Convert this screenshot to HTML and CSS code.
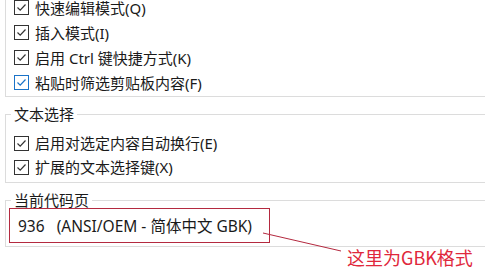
FILE: index.html
```html
<!DOCTYPE html>
<html lang="zh-CN">
<head>
<meta charset="utf-8">
<link rel="stylesheet" href="styles.css">
</head>
<body>
<div class="page">
  <fieldset class="group group-first">
    <div class="row"><span class="cb"><svg viewBox="0 0 13 13"><path d="M2.5 6.5 L5.2 9.2 L10.5 3.5"/></svg></span><span>快速编辑模式(Q)</span></div>
    <div class="row"><span class="cb"><svg viewBox="0 0 13 13"><path d="M2.5 6.5 L5.2 9.2 L10.5 3.5"/></svg></span><span>插入模式(I)</span></div>
    <div class="row"><span class="cb"><svg viewBox="0 0 13 13"><path d="M2.5 6.5 L5.2 9.2 L10.5 3.5"/></svg></span><span>启用 Ctrl 键快捷方式(K)</span></div>
    <div class="row"><span class="cb cb-focus"><svg viewBox="0 0 13 13"><path d="M2.5 6.5 L5.2 9.2 L10.5 3.5"/></svg></span><span>粘贴时筛选剪贴板内容(F)</span></div>
  </fieldset>
  <fieldset class="group group-sel">
    <legend>文本选择</legend>
    <div class="row row-sm"><span class="cb"><svg viewBox="0 0 13 13"><path d="M2.5 6.5 L5.2 9.2 L10.5 3.5"/></svg></span><span>启用对选定内容自动换行(E)</span></div>
    <div class="row row-sm"><span class="cb"><svg viewBox="0 0 13 13"><path d="M2.5 6.5 L5.2 9.2 L10.5 3.5"/></svg></span><span>扩展的文本选择键(X)</span></div>
  </fieldset>
  <fieldset class="group group-code">
    <legend>当前代码页</legend>
    <div class="codebox">936&nbsp;&nbsp;&nbsp;(ANSI/OEM - 简体中文 GBK)</div>
  </fieldset>
</div>
<svg class="arrow" width="485" height="272" viewBox="0 0 485 272"><line x1="263" y1="233" x2="341" y2="251"/></svg>
<div class="note">这里为GBK格式</div>
</body>
</html>
```
FILE: styles.css
```css
html, body {
  margin: 0;
  padding: 0;
  background: #ffffff;
  width: 485px;
  height: 272px;
  overflow: hidden;
}
body {
  position: relative;
  font-family: "Noto Sans", "Noto Sans CJK SC", sans-serif;
  font-size: 15px;
  color: #1a1a1a;
}
.page {
  padding-left: 5px;
  margin-right: -20px;
}
.group {
  border: 1px solid #dcdcdc;
  margin: 0;
  padding: 0 5px 2px 5px;
  min-width: 0;
}
.group legend {
  padding: 0 3px;
  line-height: 20px;
  height: 20px;
  font-size: 15px;
}
.group-first {
  border-top: none;
  margin-top: -5px;
  padding-bottom: 1px;
}
.group-sel {
  margin-top: 7px;
  padding-top: 7px;
  padding-bottom: 3px;
}
.group-code {
  margin-top: 7px;
  padding-top: 0;
  padding-bottom: 3px;
}
.row {
  height: 25px;
  display: flex;
  align-items: center;
  padding-left: 3px;
  line-height: 20px;
}
.row-sm {
  height: 24px;
}
.cb {
  width: 13px;
  height: 13px;
  border: 1px solid #333333;
  background: #fff;
  margin-right: 6px;
  display: flex;
  flex-shrink: 0;
}
.cb svg {
  width: 13px;
  height: 13px;
  fill: none;
  stroke: #333333;
  stroke-width: 1.2;
}
.cb-focus {
  border-color: #1a73c8;
}
.cb-focus svg {
  stroke: #1a73c8;
}
.codebox {
  margin-top: -2px;
  margin-left: -2px;
  width: 251px;
  height: 33px;
  border: 1px solid #b4293f;
  display: flex;
  align-items: center;
  padding-left: 8px;
  box-sizing: content-box;
  white-space: nowrap;
  font-size: 15.5px;
}
.arrow {
  position: absolute;
  left: 0;
  top: 0;
  pointer-events: none;
}
.arrow line {
  stroke: #b4293f;
  stroke-width: 1;
}
.note {
  position: absolute;
  left: 347px;
  top: 245px;
  font-size: 18px;
  line-height: 24px;
  color: #e0283c;
  font-family: "Noto Sans CJK SC", sans-serif;
  white-space: nowrap;
}
```
